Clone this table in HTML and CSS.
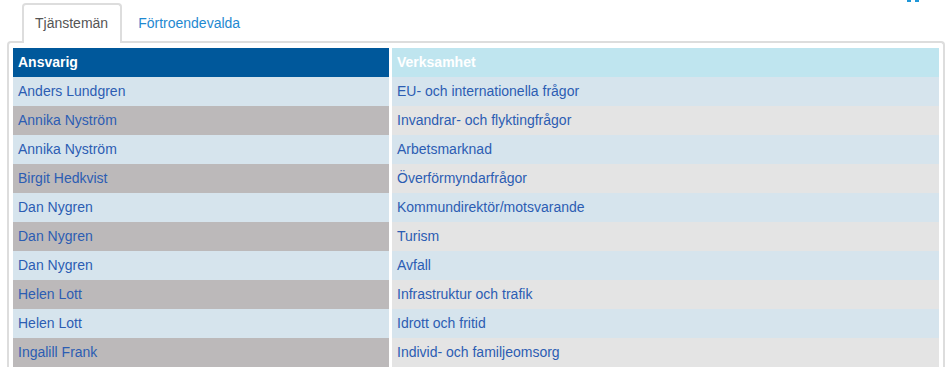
FILE: index.html
```html
<!DOCTYPE html>
<html lang="sv">
<head>
<meta charset="utf-8">
<title>Ansvar</title>
<link rel="stylesheet" href="styles.css">
</head>
<body>
<div class="corner-icon"><span></span><span></span></div>
<div class="page">
  <ul class="tabs">
    <li class="tab active">Tjänstemän</li>
    <li class="tab"><a href="#">Förtroendevalda</a></li>
  </ul>
  <div class="panel">
    <div class="grid">
      <div class="th th1">Ansvarig</div><div class="th th2">Verksamhet</div>
      <div class="td c1 odd"><a href="#">Anders Lundgren</a></div><div class="td c2 odd"><a href="#">EU- och internationella frågor</a></div>
      <div class="td c1 even"><a href="#">Annika Nyström</a></div><div class="td c2 even"><a href="#">Invandrar- och flyktingfrågor</a></div>
      <div class="td c1 odd"><a href="#">Annika Nyström</a></div><div class="td c2 odd"><a href="#">Arbetsmarknad</a></div>
      <div class="td c1 even"><a href="#">Birgit Hedkvist</a></div><div class="td c2 even"><a href="#">Överförmyndarfrågor</a></div>
      <div class="td c1 odd"><a href="#">Dan Nygren</a></div><div class="td c2 odd"><a href="#">Kommundirektör/motsvarande</a></div>
      <div class="td c1 even"><a href="#">Dan Nygren</a></div><div class="td c2 even"><a href="#">Turism</a></div>
      <div class="td c1 odd"><a href="#">Dan Nygren</a></div><div class="td c2 odd"><a href="#">Avfall</a></div>
      <div class="td c1 even"><a href="#">Helen Lott</a></div><div class="td c2 even"><a href="#">Infrastruktur och trafik</a></div>
      <div class="td c1 odd"><a href="#">Helen Lott</a></div><div class="td c2 odd"><a href="#">Idrott och fritid</a></div>
      <div class="td c1 even"><a href="#">Ingalill Frank</a></div><div class="td c2 even"><a href="#">Individ- och familjeomsorg</a></div>
    </div>
  </div>
</div>
</body>
</html>
```

FILE: styles.css
```css
html, body {
  margin: 0;
  padding: 0;
  background: #fff;
  font-family: "Liberation Sans", Arial, sans-serif;
  font-size: 14px;
  overflow: hidden;
}

.corner-icon {
  position: absolute;
  top: 0;
  left: 907px;
  display: flex;
  gap: 4px;
}
.corner-icon span {
  display: block;
  width: 4px;
  height: 2px;
  background: #1f97d8;
}

.page {
  padding: 3px 0 0 7px;
  width: 938px;
}

.tabs {
  list-style: none;
  margin: 0 0 0 15px;
  padding: 0;
  display: flex;
  gap: 3px;
  position: relative;
  z-index: 1;
}

.tab {
  box-sizing: border-box;
  height: 40px;
  padding: 0 12px 0 11px;
  line-height: 36px;
  border: 2px solid transparent;
  border-bottom: none;
  border-radius: 4px 4px 0 0;
  color: #555;
  margin-bottom: -2px;
}
.tab.active {
  border-color: #ddd;
  background: #fff;
}
.tab a {
  color: #1f89d1;
  text-decoration: none;
}

.panel {
  border: 2px solid #ddd;
  border-bottom: none;
  border-radius: 4px 4px 0 0;
  padding: 5px 4px 0 4px;
}

.grid {
  display: grid;
  grid-template-columns: 376px 547px;
  column-gap: 3px;
  grid-auto-rows: 29px;
}

.th, .td {
  padding-left: 5px;
  line-height: 29px;
  white-space: nowrap;
  overflow: hidden;
}
.th {
  color: #fff;
  font-weight: bold;
}
.th1 { background: #00589b; }
.th2 { background: #bfe5ef; }

.td a {
  color: #2c5db3;
  text-decoration: none;
}
.odd { background: #d6e4ed; }
.c1.even { background: #bcb9ba; }
.c2.even { background: #e4e4e4; }
```
